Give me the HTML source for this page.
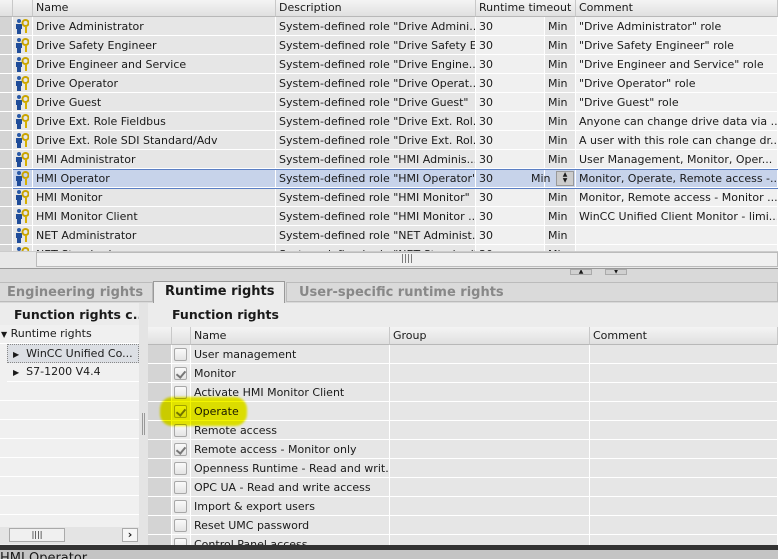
<!DOCTYPE html>
<html><head><style>
*{margin:0;padding:0;box-sizing:border-box}
body{width:778px;height:559px;overflow:hidden;background:#d9d9d9;font-family:"DejaVu Sans","Liberation Sans",sans-serif;font-size:11px;color:#1a1a1a;position:relative}
.a{position:absolute;white-space:nowrap;overflow:hidden}
.hdr{background:linear-gradient(#f4f4f4,#e0e0e0);border-right:1px solid #c8c8c8;border-bottom:1px solid #b8b8b8;padding:0 3px;line-height:15px}
.c{background:#e6e6e6;border-right:1px solid #fff;border-bottom:1px solid #fff;padding:0 3px;line-height:19px;height:19px}
.ic{width:14px;height:16px}
.cb{position:absolute;width:13px;height:13px;border:1px solid #a8a8a8;background:linear-gradient(#fafafa,#e4e4e4);border-radius:2px}
.cb.k::after{content:"";position:absolute;left:3px;top:1px;width:4px;height:7px;border:solid #777;border-width:0 2px 2px 0;transform:rotate(40deg)}
.bold{font-weight:bold;font-size:12.5px}
</style></head><body>
<div class="a hdr" style="left:0;top:0;width:13px;height:17px"></div>
<div class="a hdr" style="left:13px;top:0;width:20px;height:17px"></div>
<div class="a hdr" style="left:33px;top:0;width:243px;height:17px">Name</div>
<div class="a hdr" style="left:276px;top:0;width:200px;height:17px">Description</div>
<div class="a hdr" style="left:476px;top:0;width:100px;height:17px">Runtime timeout</div>
<div class="a hdr" style="left:576px;top:0;width:202px;height:17px">Comment</div>
<div id="top"></div>
<div class="a" style="left:0;top:251px;width:778px;height:17px;background:#e8e8e8;border-top:1px solid #ccc"></div>
<div class="a" style="left:36px;top:252px;width:742px;height:15px;background:#f0f0f0;border:1px solid #bbb;text-align:center;line-height:13px;font-size:9px;color:#555">||||</div>
<div class="a" style="left:0;top:268px;width:778px;height:1px;background:#999"></div>
<div class="a" style="left:570px;top:269px;width:22px;height:6px;background:#d0d0d0;border:1px solid #aaa;font-size:6px;line-height:4px;text-align:center">▲</div>
<div class="a" style="left:605px;top:269px;width:22px;height:6px;background:#d0d0d0;border:1px solid #aaa;font-size:6px;line-height:4px;text-align:center">▼</div>
<div class="a" style="left:0;top:282px;width:153px;height:20px;background:#dadada;border:1px solid #bbb;border-left:none;color:#888;font-size:13px;font-weight:bold;line-height:19px;padding-left:7px">Engineering rights</div>
<div class="a" style="left:153px;top:281px;width:132px;height:23px;background:#ececec;border:1px solid #999;border-bottom:none;font-size:13px;font-weight:bold;line-height:20px;padding-left:11px">Runtime rights</div>
<div class="a" style="left:286px;top:282px;width:492px;height:20px;background:#dadada;border:1px solid #bbb;color:#888;font-size:13px;font-weight:bold;line-height:19px;padding-left:12px">User-specific runtime rights</div>
<div class="a" style="left:0;top:303px;width:778px;height:242px;background:#ececec"></div>
<div class="a bold" style="left:14px;top:307px">Function rights c...</div>
<div class="a" style="left:0;top:325px;width:139px;height:202px;background:#f0f0f0"></div>
<div id="left"></div>
<div class="a" style="left:139px;top:303px;width:9px;height:242px;background:#e4e4e4"></div>
<div class="a" style="left:142px;top:413px;width:3px;height:22px;border-left:1px solid #999;border-right:1px solid #999"></div>
<div class="a" style="left:0;top:527px;width:139px;height:17px;background:#e4e4e4"></div>
<div class="a" style="left:9px;top:528px;width:56px;height:14px;background:#f0f0f0;border:1px solid #aaa;text-align:center;line-height:12px;font-size:8px">||||</div>
<div class="a" style="left:122px;top:528px;width:16px;height:14px;background:#f6f6f6;border:1px solid #aaa;text-align:center;line-height:12px;font-weight:bold">›</div>
<div class="a bold" style="left:172px;top:307px">Function rights</div>
<div class="a hdr" style="left:148px;top:327px;width:24px;height:18px"></div>
<div class="a hdr" style="left:172px;top:327px;width:19px;height:18px"></div>
<div class="a hdr" style="left:191px;top:327px;width:199px;height:18px;line-height:17px">Name</div>
<div class="a hdr" style="left:390px;top:327px;width:200px;height:18px;line-height:17px">Group</div>
<div class="a hdr" style="left:590px;top:327px;width:188px;height:18px;line-height:17px">Comment</div>
<div id="right"></div>
<div class="a" style="left:160px;top:397px;width:87px;height:29px;background:#f3f500;border-radius:12px;mix-blend-mode:multiply;filter:blur(1px)"></div>
<div class="a" style="left:0;top:545px;width:778px;height:5px;background:#333"></div>
<div class="a" style="left:0;top:550px;width:778px;height:9px;background:#c4c4c4;font-size:13px;line-height:18px">HMI Operator</div>
<script>
var top_=[["Drive Administrator",'System-defined role "Drive Admini...','"Drive Administrator" role'],
["Drive Safety Engineer",'System-defined role "Drive Safety E.','"Drive Safety Engineer" role'],
["Drive Engineer and Service",'System-defined role "Drive Engine...','"Drive Engineer and Service" role'],
["Drive Operator",'System-defined role "Drive Operat...','"Drive Operator" role'],
["Drive Guest",'System-defined role "Drive Guest"','"Drive Guest" role'],
["Drive Ext. Role Fieldbus",'System-defined role "Drive Ext. Rol...','Anyone can change drive data via ...'],
["Drive Ext. Role SDI Standard/Adv",'System-defined role "Drive Ext. Rol...','A user with this role can change dr...'],
["HMI Administrator",'System-defined role "HMI Adminis...','User Management, Monitor, Oper...'],
["HMI Operator",'System-defined role "HMI Operator"','Monitor, Operate, Remote access -..'],
["HMI Monitor",'System-defined role "HMI Monitor"','Monitor, Remote access - Monitor ...'],
["HMI Monitor Client",'System-defined role "HMI Monitor ...','WinCC Unified Client Monitor - limi...'],
["NET Administrator",'System-defined role "NET Administ..',''],
["NET Standard",'System-defined role "NET Standard"','']];
var h="",icon='<svg class="ic" viewBox="0 0 14 16"><circle cx="4" cy="3" r="2" fill="#2a5aa8"/><path d="M1 6h6v5H6v5H2v-5H1z" fill="#1f4c99"/><circle cx="10.5" cy="5" r="3" fill="none" stroke="#c9a400" stroke-width="2"/><path d="M10 8h2v7h-2z" fill="#d6b000"/></svg>';
top_.forEach(function(r,i){var y=17+i*19;var sel=i==8;var bg=sel?"background:#c7d3ea;":"";
h+='<div class="a c" style="left:0;top:'+y+'px;width:13px;background:#d4d4d4"></div>';
h+='<div class="a c" style="left:13px;top:'+y+'px;width:20px;padding:1px 2px;'+bg+'">'+icon+'</div>';
h+='<div class="a c" style="left:33px;top:'+y+'px;width:243px;'+bg+'">'+r[0]+'</div>';
h+='<div class="a c" style="left:276px;top:'+y+'px;width:200px;'+bg+'">'+r[1]+'</div>';
h+='<div class="a c" style="left:476px;top:'+y+'px;width:69px;'+(sel?bg:"background:#f0f0f0;")+'">30</div>';
h+='<div class="a c" style="left:545px;top:'+y+'px;width:31px;'+(sel?bg:"")+'">'+(sel?'':'Min')+'</div>';
h+='<div class="a c" style="left:576px;top:'+y+'px;width:202px;'+(sel?bg:"background:#f0f0f0;")+'">'+r[2]+'</div>';
});
h+='<div class="a" style="left:13px;top:169px;width:765px;height:20px;border:1px solid #5b7fc4;border-left:none;border-right:none"></div>';
h+='<div class="a" style="left:531px;top:171px;line-height:16px">Min</div><div class="a" style="left:556px;top:171px;width:18px;height:15px;background:#ccc;border:1px solid #999;font-size:6px;line-height:6px;text-align:center">▲<br>▼</div>';
document.getElementById("top").outerHTML=h;
h='<div class="a" style="left:0;top:325px;width:139px;height:19px;border-bottom:1px solid #fff;line-height:18px;padding-left:1px"><span style="font-size:8px">▼</span> Runtime rights</div>';
h+='<div class="a" style="left:7px;top:344px;width:132px;height:19px;background:#dcdfe4;border:1px dotted #888;line-height:17px;padding-left:5px"><span style="font-size:8px">▶</span>&nbsp; WinCC Unified Co...</div>';
h+='<div class="a" style="left:7px;top:363px;width:132px;height:19px;border-bottom:1px solid #fff;line-height:18px;padding-left:6px"><span style="font-size:8px">▶</span>&nbsp; S7-1200 V4.4</div>';
for(var j=0;j<8;j++)h+='<div class="a" style="left:0;top:'+(382+j*19)+'px;width:139px;height:19px;border-bottom:1px solid #fff"></div>';
document.getElementById("left").outerHTML=h;
var fr=[["User management",0],["Monitor",1],["Activate HMI Monitor Client",0],["Operate",1],["Remote access",0],["Remote access - Monitor only",1],["Openness Runtime - Read and writ..",0],["OPC UA - Read and write access",0],["Import & export users",0],["Reset UMC password",0],["Control Panel access",0]];
h="";fr.forEach(function(r,i){var y=345+i*19;
h+='<div class="a c" style="left:148px;top:'+y+'px;width:24px;background:#d4d4d4"></div>';
h+='<div class="a c" style="left:172px;top:'+y+'px;width:19px;background:#ececec"></div><div class="cb'+(r[1]?' k':'')+'" style="left:174px;top:'+(y+3)+'px"></div>';
h+='<div class="a c" style="left:191px;top:'+y+'px;width:199px">'+r[0].replace("&","&amp;")+'</div>';
h+='<div class="a c" style="left:390px;top:'+y+'px;width:200px"></div><div class="a c" style="left:590px;top:'+y+'px;width:188px"></div>';});
document.getElementById("right").outerHTML=h;
</script>
</body></html>
